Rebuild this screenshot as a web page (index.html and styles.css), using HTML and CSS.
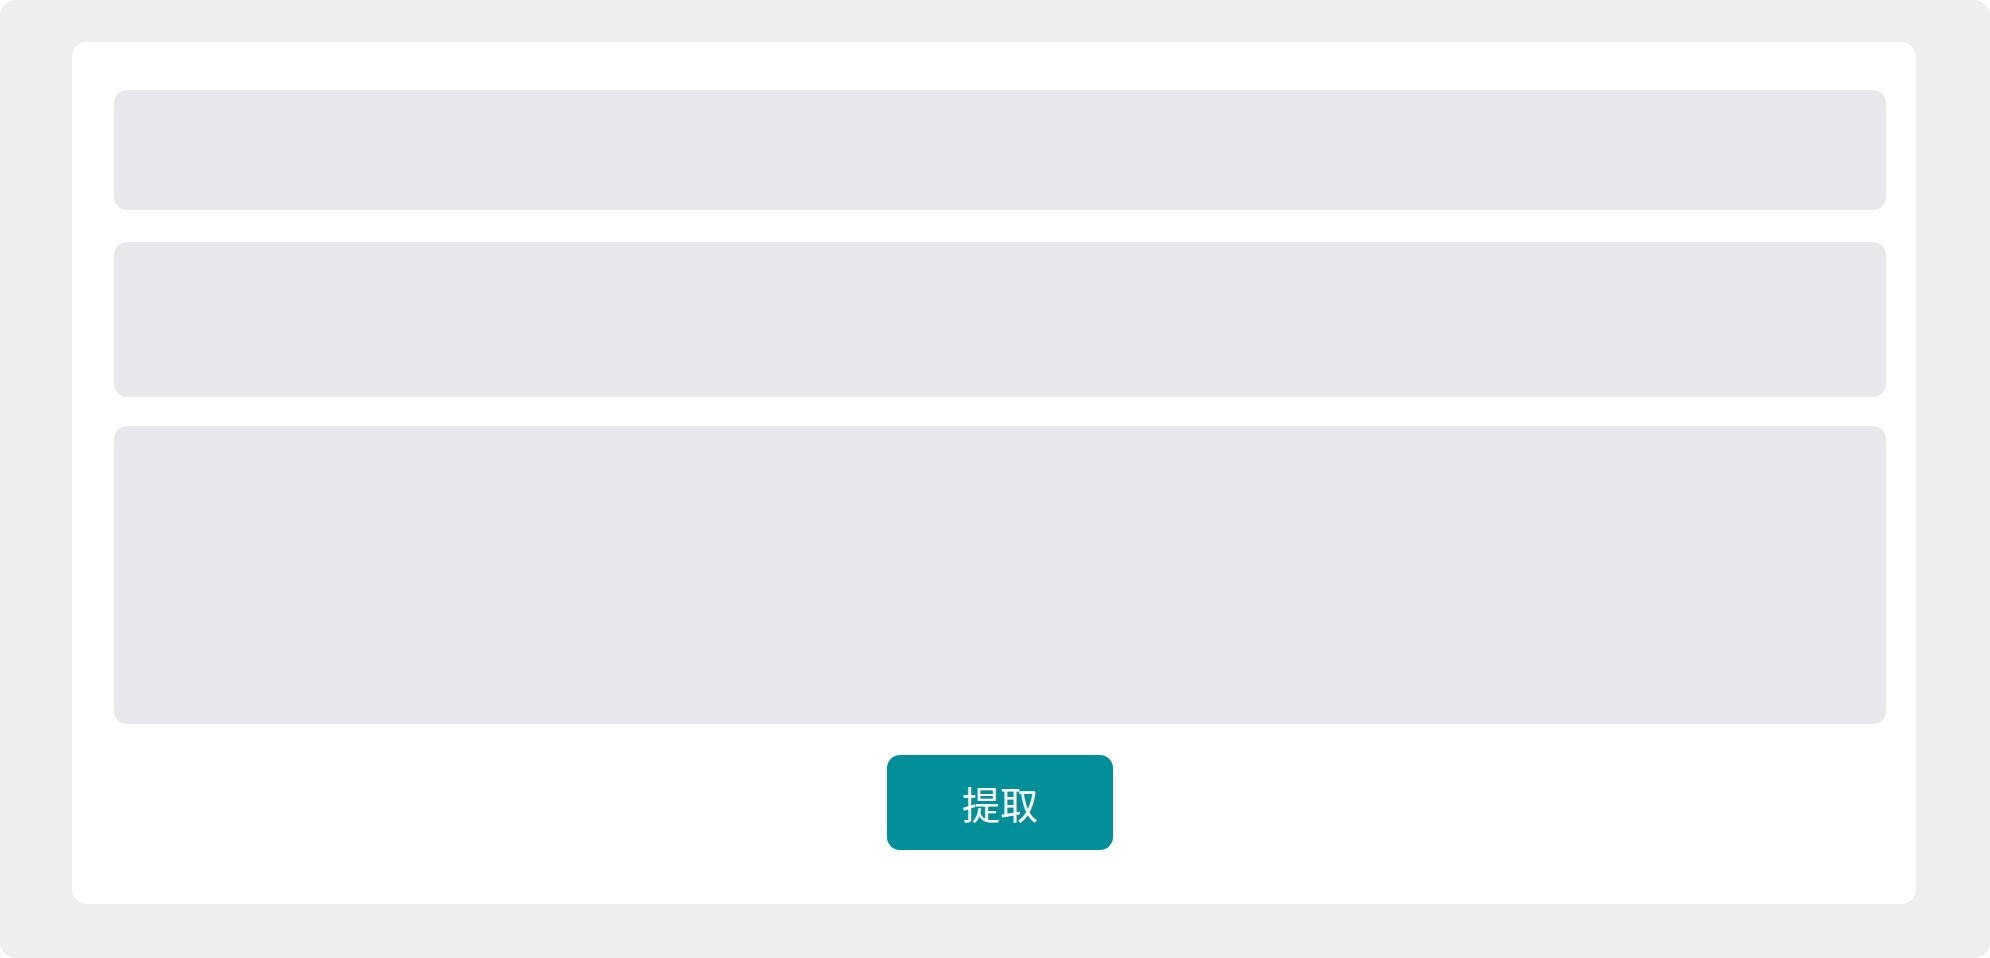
FILE: index.html
```html
<!DOCTYPE html>
<html lang="zh">
<head>
<meta charset="utf-8">
<link rel="stylesheet" href="styles.css">
</head>
<body>
<div class="page">
  <div class="card">
    <div class="panel panel-1"></div>
    <div class="panel panel-2"></div>
    <div class="panel panel-3"></div>
    <div class="actions">
      <button class="btn">提取</button>
    </div>
  </div>
</div>
</body>
</html>
```
FILE: styles.css
```css
html, body {
  margin: 0;
  padding: 0;
  background: #ffffff;
}
.page {
  width: 1990px;
  height: 958px;
  box-sizing: border-box;
  background: #eeeeee;
  border-radius: 16px;
  padding: 42px 74px 54px 72px;
  font-family: "Noto Sans CJK SC", "Noto Sans", sans-serif;
}
.card {
  background: #ffffff;
  border-radius: 15px;
  height: 862px;
  box-sizing: border-box;
  padding: 48px 30px 0 42px;
  display: flex;
  flex-direction: column;
}
.panel {
  background: #e7e8ec;
  border-radius: 13px;
}
.panel-1 { height: 120px; }
.panel-2 { height: 155px; margin-top: 32px; }
.panel-3 { height: 298px; margin-top: 29px; }
.actions {
  display: flex;
  justify-content: center;
  margin-top: 31px;
  padding-right: 0;
}
.btn {
  width: 226px;
  height: 95px;
  margin-left: 0;
  border: none;
  border-radius: 13px;
  background: #028f99;
  color: #ffffff;
  font-family: "Noto Sans CJK SC", "Noto Sans", sans-serif;
  font-size: 38px;
  line-height: 1;
  padding: 0;
  cursor: pointer;
}
```
